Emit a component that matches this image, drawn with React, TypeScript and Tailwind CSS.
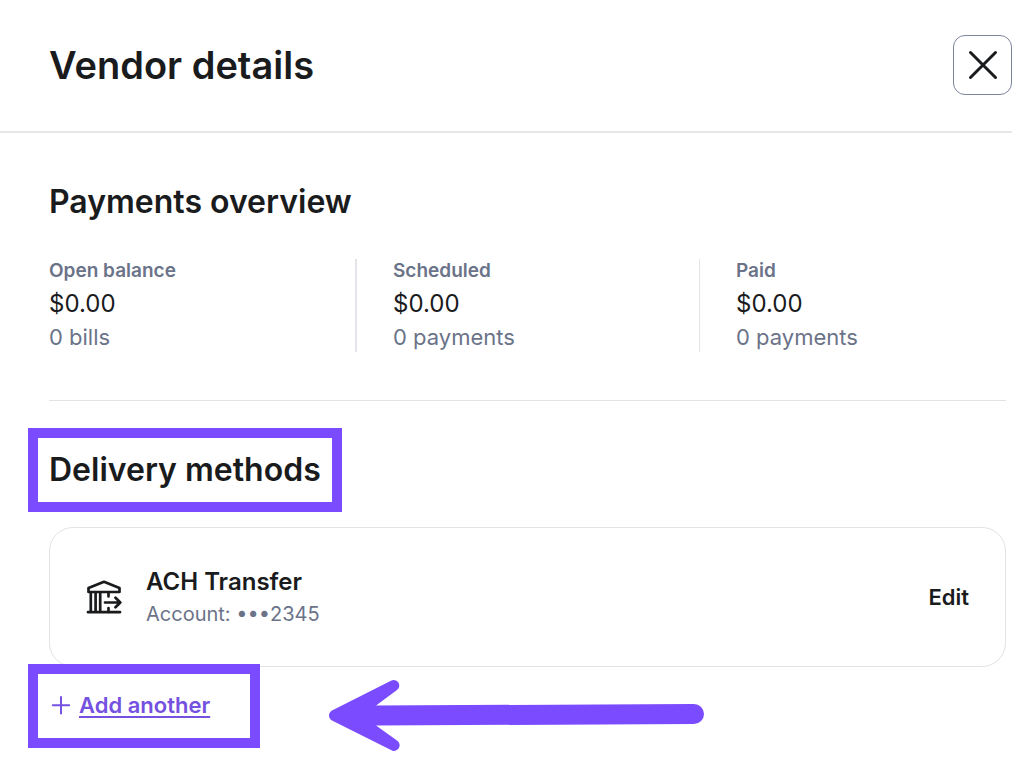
import { Fragment } from "react";

const stats = [
  { label: "Open balance", amount: "$0.00", detail: "0 bills", divider: "" },
  { label: "Scheduled", amount: "$0.00", detail: "0 payments", divider: "w-0.5" },
  { label: "Paid", amount: "$0.00", detail: "0 payments", divider: "w-px" },
];

function CloseIcon() {
  return (
    <svg width="30" height="30" viewBox="0 0 30 30" fill="none" aria-hidden="true">
      <path
        d="M2.5 2.5 27.5 27.5M27.5 2.5 2.5 27.5"
        stroke="currentColor"
        strokeWidth="3"
        strokeLinecap="round"
      />
    </svg>
  );
}

function BankTransferIcon() {
  return (
    <svg
      width="36"
      height="36"
      viewBox="0 0 36 36"
      fill="none"
      stroke="currentColor"
      strokeWidth="2.7"
      strokeLinecap="round"
      strokeLinejoin="round"
      aria-hidden="true"
    >
      <path d="M2.5 13V9L18 2.8 33.5 9V13Z" />
      <path d="M2 33.2H34M4.8 14V33M9.6 14V33M14.2 14V33" />
      <path d="M22.5 14V17.5M22.5 29V33" />
      <path d="M19 23.5H34M29.5 18.8 34.3 23.5 29.5 28.2" />
    </svg>
  );
}

function PlusIcon() {
  return (
    <svg width="20" height="20" viewBox="0 0 20 20" fill="none" aria-hidden="true">
      <path
        d="M10 2V18.5M1.8 10.2H18.2"
        stroke="currentColor"
        strokeWidth="2"
        strokeLinecap="round"
      />
    </svg>
  );
}

function PointerArrow() {
  return (
    <svg width="376" height="72" viewBox="0 0 376 72" fill="currentColor" aria-hidden="true">
      <path d="M3 31.5 62 1.8A5.5 5.5 0 0 1 68 11L47 26.5 365 25A10 10 0 0 1 365 45L47 46.5 68 61.5A5.5 5.5 0 0 1 62 71L3 41.5C-1 39-1 34 3 31.5Z" />
    </svg>
  );
}

export default function App() {
  return (
    <div className="min-h-screen bg-white pb-5 font-['Inter','Liberation_Sans',sans-serif] text-[#1a1b1d]">
      <header className="flex items-center justify-between border-b-2 border-[#e6e6e6] pt-[35px] pb-9 pl-[49px]">
        <h1 className="text-[38px] leading-[58px] font-semibold">Vendor details</h1>
        <button
          type="button"
          aria-label="Close"
          className="flex h-[60px] w-[59px] items-center justify-center rounded-xl border border-[#7c8499]"
        >
          <CloseIcon />
        </button>
      </header>

      <main className="pr-1.5 pl-[49px]">
        <section className="border-b border-[#e2e3e6] pt-12 pb-12">
          <h2 className="text-[32px] leading-[42px] font-semibold">Payments overview</h2>
          <div className="mt-9 grid grid-cols-[1fr_auto_1fr_auto_1fr] gap-9">
            {stats.map((stat) => (
              <Fragment key={stat.label}>
                {stat.divider && <div className={`${stat.divider} bg-[#e4e5e8]`} />}
                <div className="flex h-[93px] flex-col">
                  <p className="text-[19px] leading-6 font-semibold text-[#6b7389]">
                    {stat.label}
                  </p>
                  <p className="text-[24px] leading-[42px]">{stat.amount}</p>
                  <p className="text-[22px] leading-6 text-[#6b7389]">{stat.detail}</p>
                </div>
              </Fragment>
            ))}
          </div>
        </section>

        <section className="pt-12">
          <div className="relative">
            <h2 className="text-[32px] leading-[42px] font-semibold">Delivery methods</h2>
            <div className="absolute -top-[21px] -left-[21px] h-[84px] w-[314px] border-10 border-[#7a4bff]" />
          </div>

          <div className="mt-9 flex h-[140px] items-center rounded-3xl border border-[#e2e3e6] px-9">
            <BankTransferIcon />
            <div className="ml-6 flex-1 pt-0.5">
              <h3 className="text-[24px] leading-8 font-semibold">ACH Transfer</h3>
              <p className="text-[20px] leading-8 text-[#6b7389]">Account: •••2345</p>
            </div>
            <button type="button" className="text-[22px] leading-8 font-semibold">
              Edit
            </button>
          </div>

          <div className="relative pt-[22px]">
            <a
              href="#add"
              className="inline-flex items-center gap-2 pl-0.5 text-[22px] leading-8 font-semibold text-[#7551e0]"
            >
              <PlusIcon />
              <span className="underline decoration-2 underline-offset-3">Add another</span>
            </a>
            <div className="absolute -top-[3px] -left-[21px] h-[84px] w-[232px] border-10 border-[#7a4bff]" />
            <div className="absolute top-3 left-[280px] text-[#7a4bff]">
              <PointerArrow />
            </div>
          </div>
        </section>
      </main>
    </div>
  );
}
